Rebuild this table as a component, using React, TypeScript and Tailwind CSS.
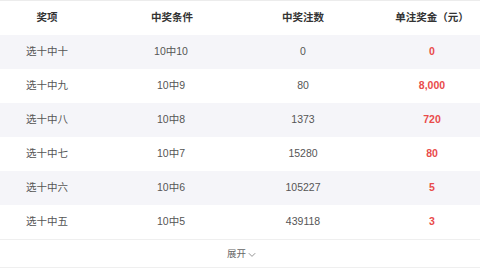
import React from 'react';

interface PrizeRow {
  name: string;
  condition: string;
  count: string;
  amount: string;
}

const ROWS: PrizeRow[] = [
  { name: '选十中十', condition: '10中10', count: '0', amount: '0' },
  { name: '选十中九', condition: '10中9', count: '80', amount: '8,000' },
  { name: '选十中八', condition: '10中8', count: '1373', amount: '720' },
  { name: '选十中七', condition: '10中7', count: '15280', amount: '80' },
  { name: '选十中六', condition: '10中6', count: '105227', amount: '5' },
  { name: '选十中五', condition: '10中5', count: '439118', amount: '3' },
];

const cols = 'grid grid-cols-[94px_154px_110px_1fr] items-center';

const App: React.FC = () => {
  return (
    <div className="w-[480px] h-[270px] bg-white overflow-hidden font-['Liberation_Sans','Noto_Sans_CJK_SC',sans-serif]">
      <div className="border-t border-[#ececec]">
        <div className={`${cols} h-[34px] text-[10.5px] font-semibold text-[#333]`}>
          <div className="text-center">奖项</div>
          <div className="text-center pl-[2px]">中奖条件</div>
          <div className="text-center">中奖注数</div>
          <div className="text-center pl-[26px]">单注奖金（元）</div>
        </div>

        {ROWS.map((row, i) => (
          <div
            key={row.name}
            className={`${cols} h-[34px] text-[10.5px] text-[#555] ${i % 2 === 0 ? 'bg-[#f5f5f9]' : 'bg-white'}`}
          >
            <div className="text-center">{row.name}</div>
            <div className="text-center">{row.condition}</div>
            <div className="text-center">{row.count}</div>
            <div className="text-center pl-[26px] font-bold text-[#e94b4b]">{row.amount}</div>
          </div>
        ))}

        <div className="h-[29px] pt-[2px] border-t border-b border-[#efefef] flex items-center justify-center gap-[2px] text-[9.5px] text-[#666]">
          <span className="pl-[3px]">展开</span>
          <svg width="8" height="6" viewBox="0 0 8 6" fill="none" stroke="#888" strokeWidth="0.9">
            <path d="M0.8 1.2 L4 4.4 L7.2 1.2" />
          </svg>
        </div>
      </div>
    </div>
  );
};

export default App;
